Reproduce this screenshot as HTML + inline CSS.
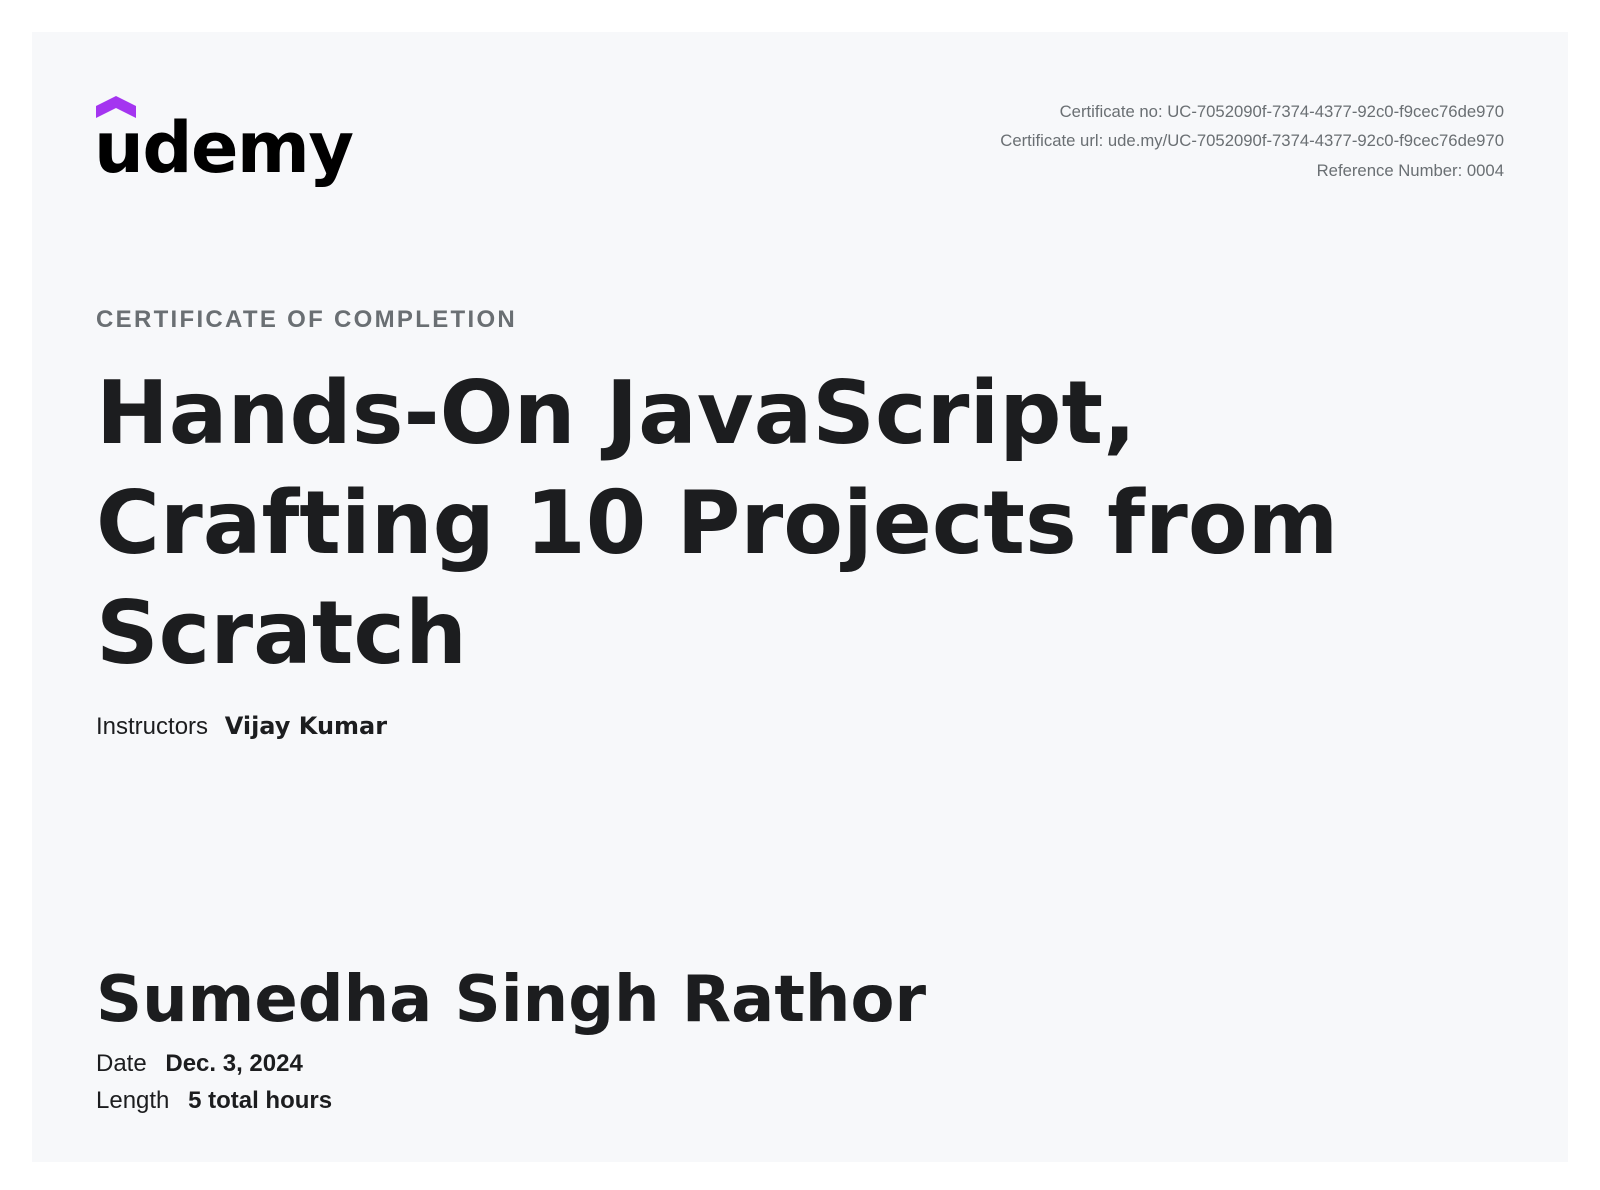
<!DOCTYPE html>
<html><head><meta charset="utf-8"><style>
html,body{margin:0;padding:0;background:#fff;}
body{width:1600px;height:1190px;position:relative;overflow:hidden;font-family:"Liberation Sans",sans-serif;}
.card{position:absolute;left:32px;top:32px;width:1536px;height:1130px;background:#f7f8fa;}
.a{position:absolute;white-space:nowrap;line-height:1;}
.dj{font-family:"DejaVu Sans",sans-serif;font-weight:bold;color:#1c1d1f;}
.meta{right:96px;font-size:16.7px;color:#6a6f73;text-align:right;}
.lbl{font-size:24px;color:#1c1d1f;}
.lbl b{margin-left:12px;}
</style></head><body>
<div class="card"></div>
<svg class="a" style="left:0;top:0" width="200" height="130"><polygon points="96,106 116,96 136,106 136,118 116,108 96,118" fill="#a435f0"/></svg>
<div class="a dj" style="left:94px;top:113px;font-size:70px;letter-spacing:-1.5px;color:#000;font-weight:600">udemy</div>
<div class="a meta" style="top:104px">Certificate no: UC-7052090f-7374-4377-92c0-f9cec76de970</div>
<div class="a meta" style="top:133px">Certificate url: ude.my/UC-7052090f-7374-4377-92c0-f9cec76de970</div>
<div class="a meta" style="top:163px">Reference Number: 0004</div>
<div class="a" style="left:96px;top:308px;font-size:24px;font-weight:bold;letter-spacing:2.3px;color:#6a6f73">CERTIFICATE OF COMPLETION</div>
<div class="a dj" style="left:96px;top:358px;font-size:87px;line-height:110px;white-space:normal;width:1400px">Hands-On JavaScript,<br>Crafting 10 Projects from<br>Scratch</div>
<div class="a lbl" style="left:96px;top:714px">Instructors <b class="dj" style="font-size:24px;margin-left:10px">Vijay Kumar</b></div>
<div class="a dj" style="left:96px;top:968px;font-size:64px">Sumedha Singh Rathor</div>
<div class="a lbl" style="left:96px;top:1052px">Date <b>Dec. 3, 2024</b></div>
<div class="a lbl" style="left:96px;top:1089px">Length <b>5 total hours</b></div>
</body></html>
